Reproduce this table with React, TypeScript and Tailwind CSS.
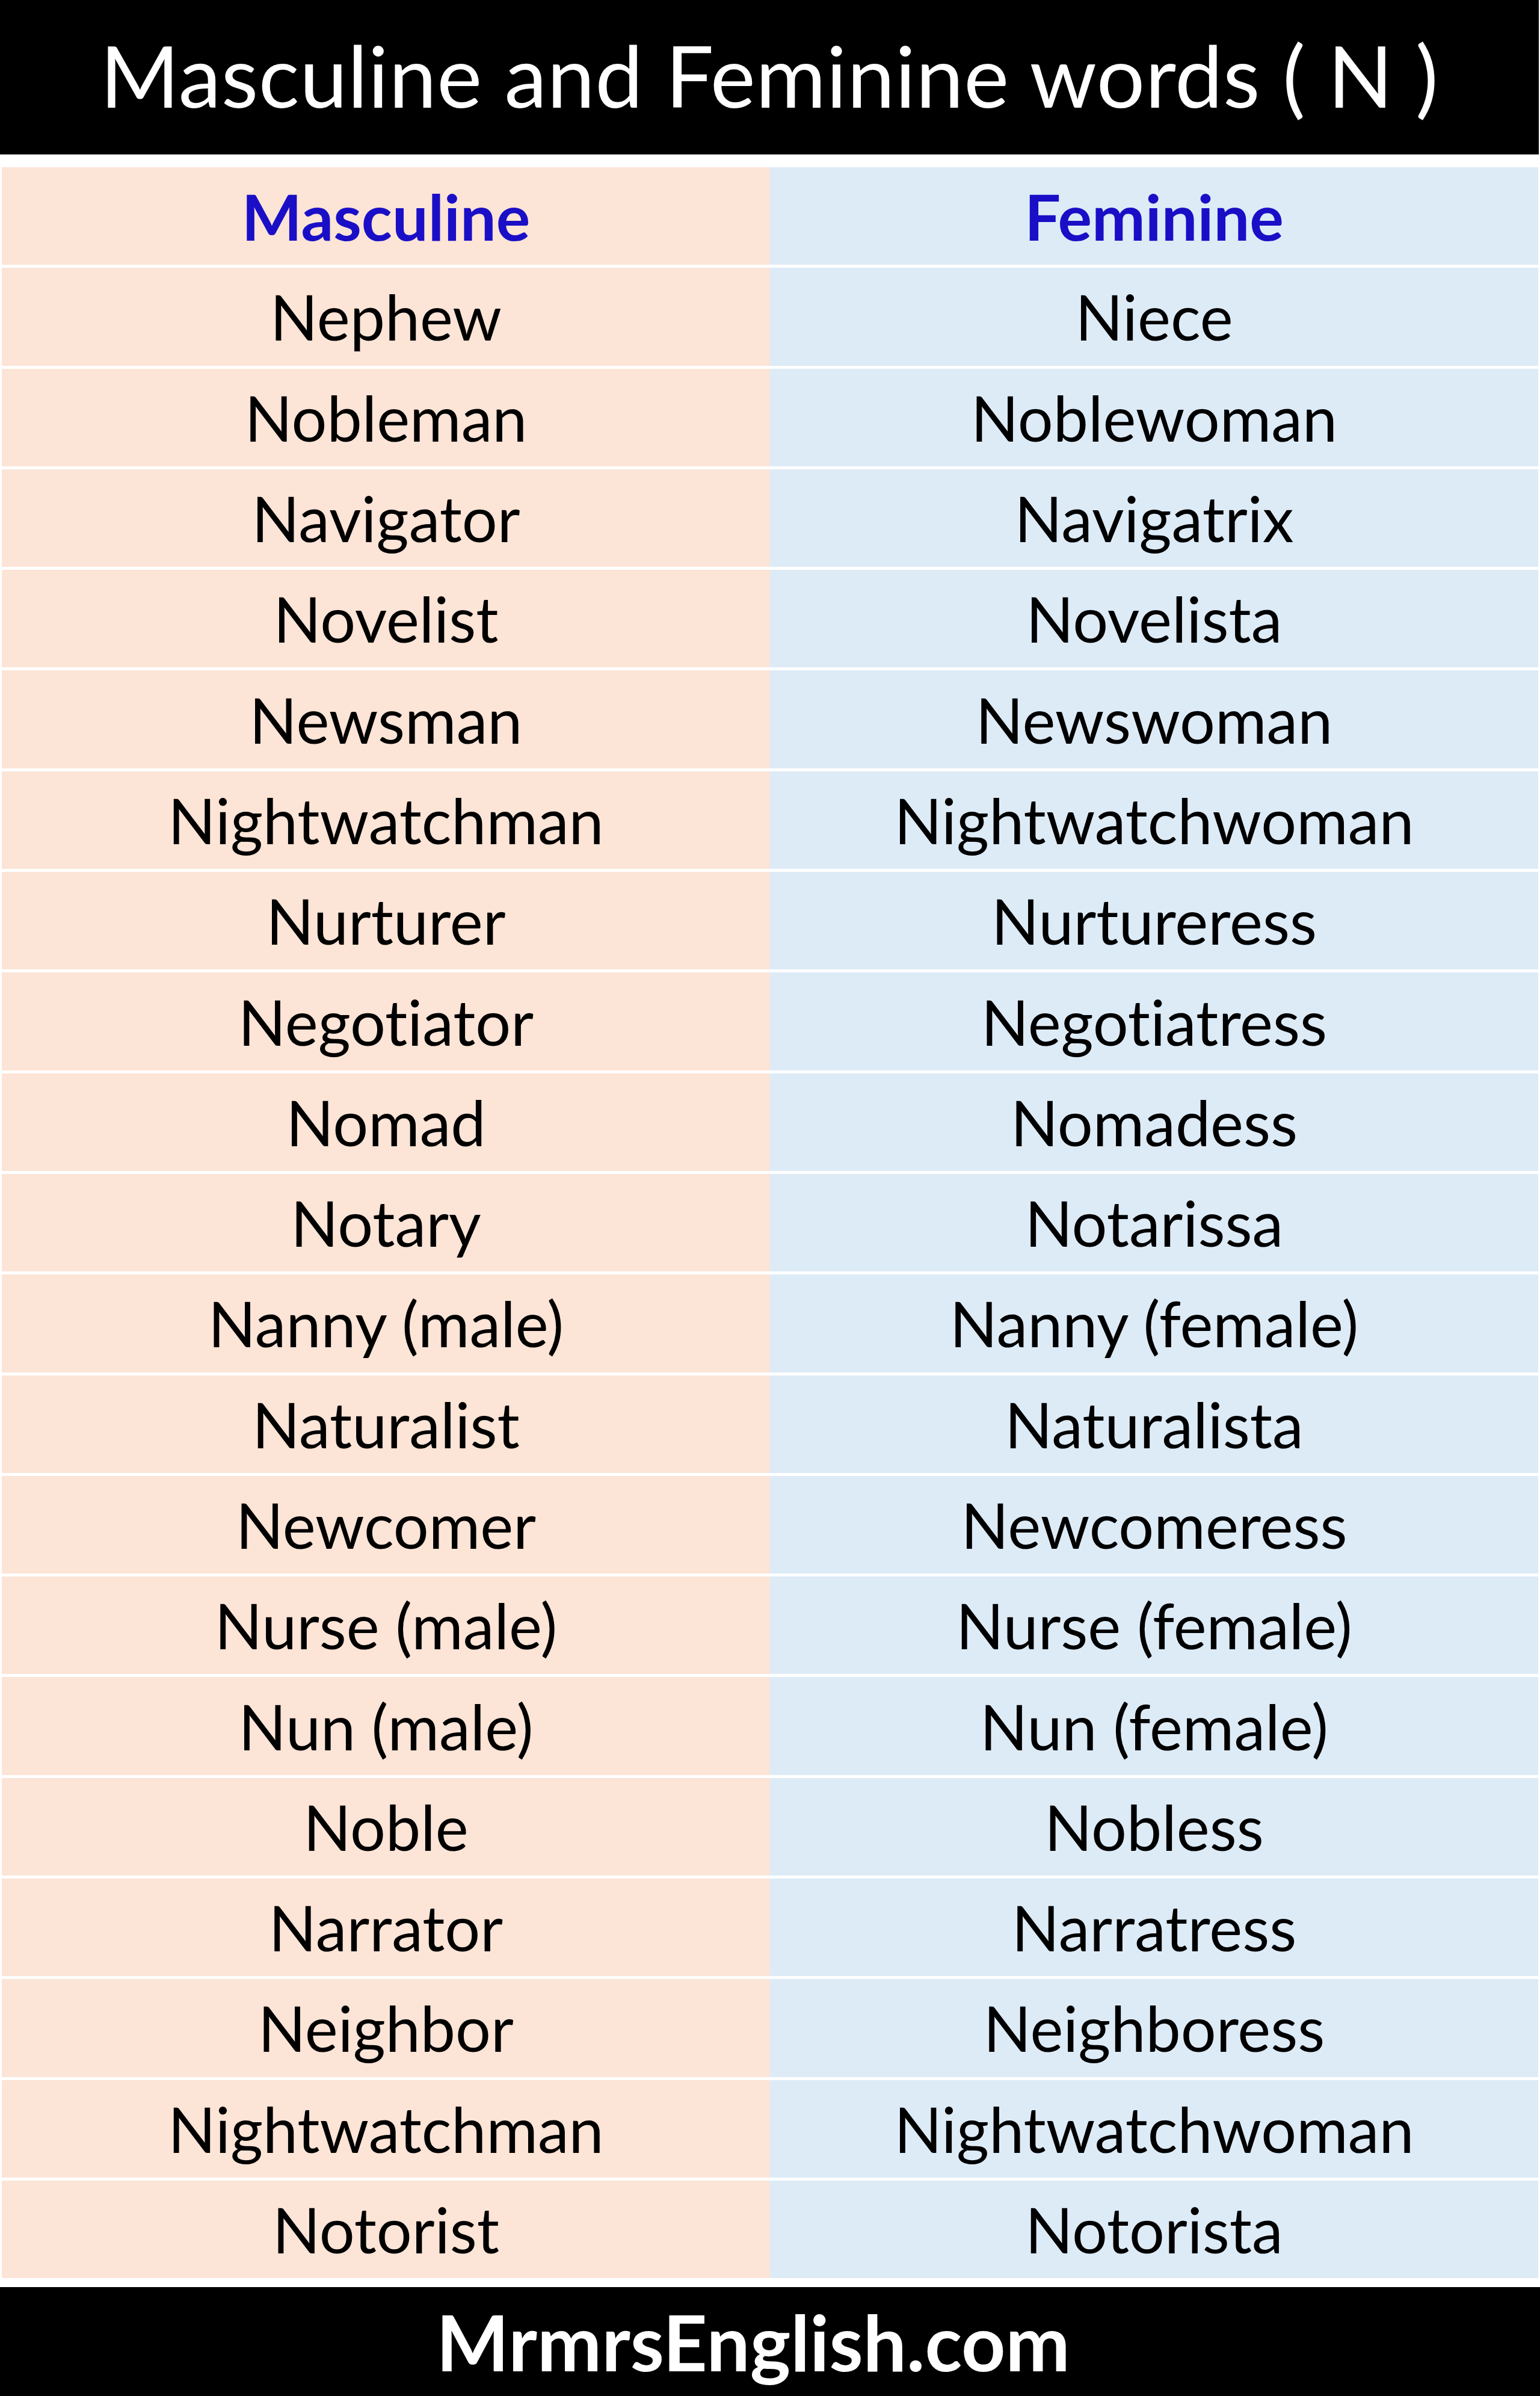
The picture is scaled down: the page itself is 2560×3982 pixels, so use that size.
const rows: [string, string][] = [
  ['Nephew', 'Niece'],
  ['Nobleman', 'Noblewoman'],
  ['Navigator', 'Navigatrix'],
  ['Novelist', 'Novelista'],
  ['Newsman', 'Newswoman'],
  ['Nightwatchman', 'Nightwatchwoman'],
  ['Nurturer', 'Nurtureress'],
  ['Negotiator', 'Negotiatress'],
  ['Nomad', 'Nomadess'],
  ['Notary', 'Notarissa'],
  ['Nanny (male)', 'Nanny (female)'],
  ['Naturalist', 'Naturalista'],
  ['Newcomer', 'Newcomeress'],
  ['Nurse (male)', 'Nurse (female)'],
  ['Nun (male)', 'Nun (female)'],
  ['Noble', 'Nobless'],
  ['Narrator', 'Narratress'],
  ['Neighbor', 'Neighboress'],
  ['Nightwatchman', 'Nightwatchwoman'],
  ['Notorist', 'Notorista'],
]

export default function App() {
  return (
    <div className="w-[2560px] h-[3982px] bg-white flex flex-col font-['Lato','Open_Sans',sans-serif] [font-variant-ligatures:none]">
      {/* title bar */}
      <div className="h-[257px] mr-[2px] bg-black border-b border-[#555] flex items-center justify-center">
        <h1 className="text-white text-[142px] leading-none tracking-[0.5px] -mt-[8px]">
          Masculine and Feminine words ( N )
        </h1>
      </div>

      {/* table */}
      <div className="mt-[21px] px-[3px] flex flex-col gap-[5px]">
        <div className="h-[162.3px] grid grid-cols-2 text-[106px] font-bold text-[#1a0fc6]">
          <div className="bg-[#fce4d6] flex items-center justify-center">Masculine</div>
          <div className="bg-[#ddebf7] flex items-center justify-center">Feminine</div>
        </div>
        {rows.map(([m, f], i) => (
          <div key={i} className="h-[162.3px] grid grid-cols-2 text-[104px] text-black">
            <div className="bg-[#fce4d6] flex items-center justify-center">{m}</div>
            <div className="bg-[#ddebf7] flex items-center justify-center">{f}</div>
          </div>
        ))}
      </div>

      {/* footer */}
      <div className="mt-auto h-[181px] bg-black flex items-center justify-center pr-[56px]">
        <span className="text-white font-bold text-[128px] leading-none">MrmrsEnglish.com</span>
      </div>
    </div>
  )
}
